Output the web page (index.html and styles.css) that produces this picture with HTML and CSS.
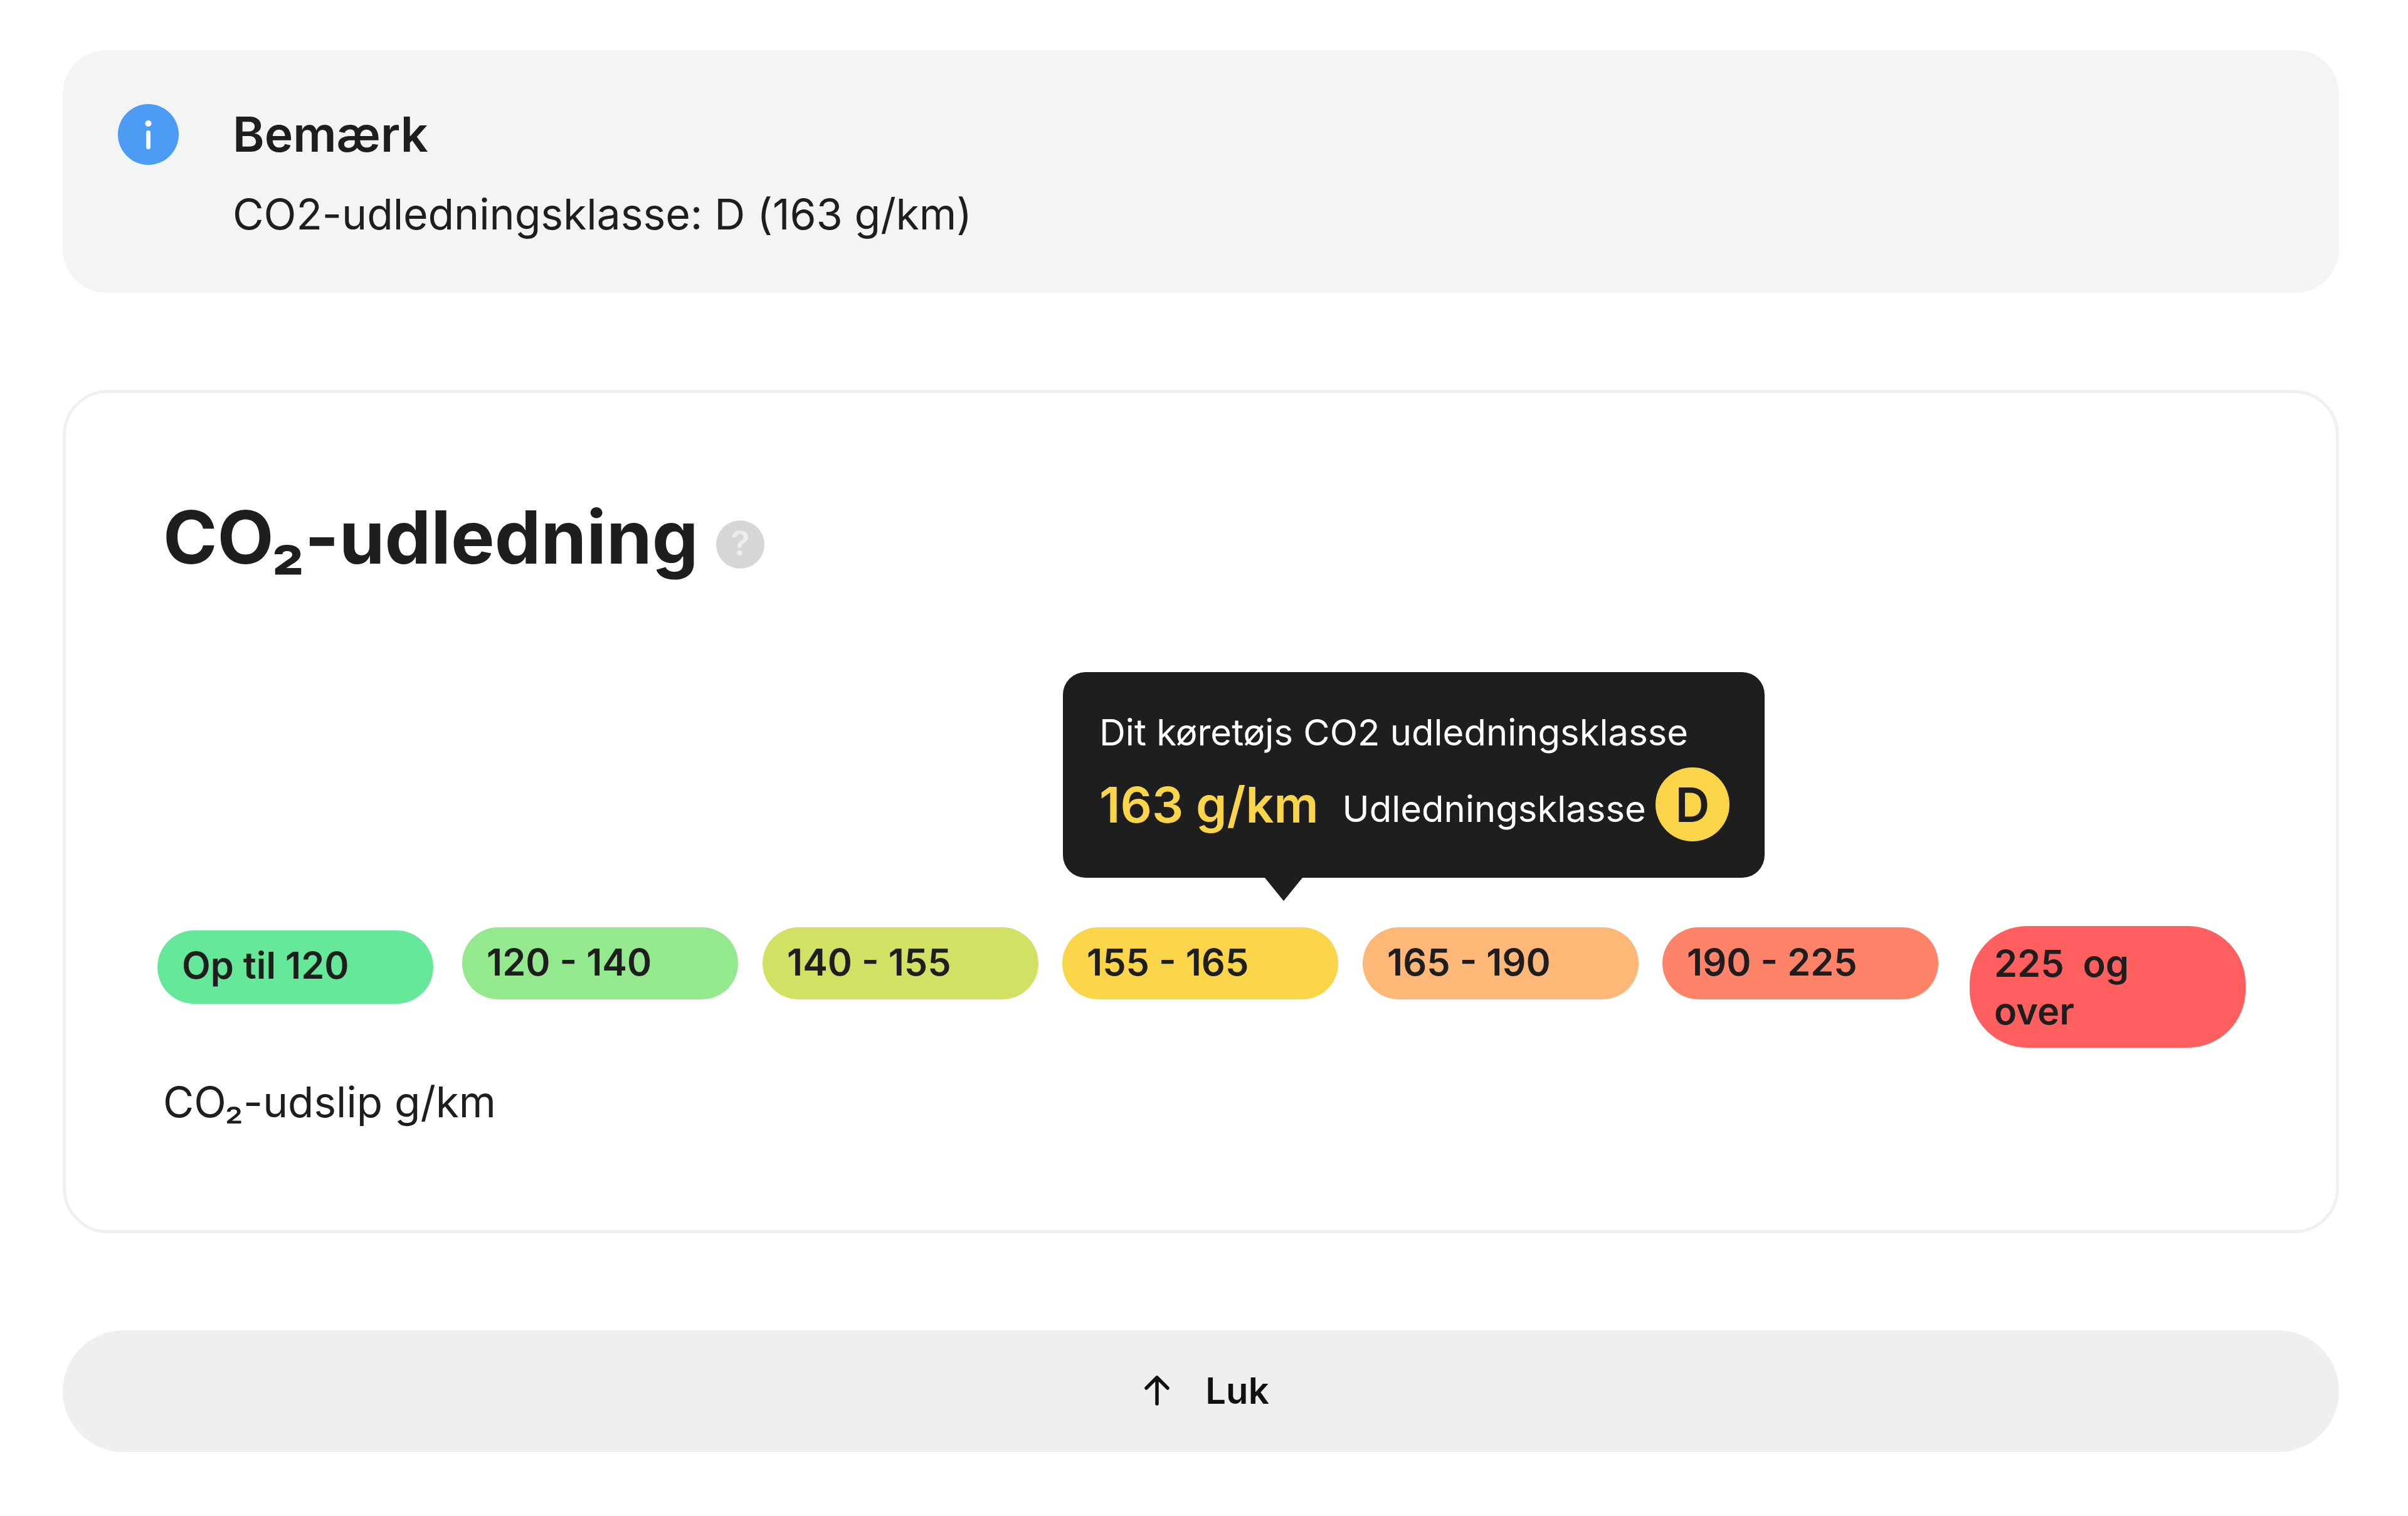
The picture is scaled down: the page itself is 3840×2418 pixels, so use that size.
FILE: index.html
```html
<!DOCTYPE html>
<html lang="da">
<head>
<meta charset="utf-8">
<title>CO2-udledning</title>
<link rel="stylesheet" href="styles.css">
</head>
<body>
<main class="page">
  <section class="note">
    <svg class="note-icon" viewBox="0 0 97 97" aria-hidden="true">
      <circle cx="48.5" cy="48.5" r="48.5" fill="#4c9bf5"/>
      <circle cx="48.5" cy="31" r="5" fill="#fff"/>
      <rect x="45" y="42" width="7" height="30" rx="3.5" fill="#fff"/>
    </svg>
    <div class="note-body">
      <h2 class="note-title">Bemærk</h2>
      <p class="note-text">CO2-udledningsklasse: D (163 g/km)</p>
    </div>
  </section>

  <section class="card">
    <h1 class="card-title">CO₂-udledning
      <svg class="help-icon" viewBox="0 0 78 78" aria-hidden="true">
        <circle cx="39" cy="39" r="39" fill="#d6d6d6"/>
        <text x="39" y="57" text-anchor="middle" class="help-mark">?</text>
      </svg>
    </h1>

    <div class="scale">
      <div class="tooltip">
        <p class="tooltip-title">Dit køretøjs CO2 udledningsklasse</p>
        <div class="tooltip-row">
          <span class="tooltip-value">163 g/km</span>
          <span class="tooltip-label">Udledningsklasse</span>
          <span class="tooltip-badge">D</span>
        </div>
      </div>
      <div class="pill pill-a">Op til 120</div>
      <div class="pill pill-b">120 - 140</div>
      <div class="pill pill-c">140 - 155</div>
      <div class="pill pill-d">155 - 165</div>
      <div class="pill pill-e">165 - 190</div>
      <div class="pill pill-f">190 - 225</div>
      <div class="pill pill-g">225&nbsp; og<br>over</div>
    </div>

    <p class="unit">CO₂-udslip g/km</p>
  </section>

  <button class="close" type="button">
    <svg class="close-icon" viewBox="0 0 40 48" aria-hidden="true">
      <path d="M20 45V3M3 20 20 3l17 17" fill="none" stroke="#111" stroke-width="5.5" stroke-linecap="round" stroke-linejoin="round"/>
    </svg>
    <span>Luk</span>
  </button>
</main>
</body>
</html>
```
FILE: styles.css
```css
* { box-sizing: border-box; }
html, body { margin: 0; background: #fff; }
body { font-family: Inter, "Liberation Sans", sans-serif; color: #1e1e1e; }
.page { width: 3840px; height: 2418px; padding: 80px 110px 0 100px; display: flex; flex-direction: column; }

.note { height: 387px; background: #f3f5f4; border-radius: 70px; padding: 86px 86px 0 88px; display: flex; gap: 86px; }
.note-icon { width: 97px; height: 97px; flex: none; }
.note-title { margin: 0; font-size: 77px; line-height: 96px; font-weight: 600; }
.note-text { margin: 31px 0 0; font-size: 68px; line-height: 96px; font-weight: 400; letter-spacing: -0.1px; }

.card { position: relative; height: 1345px; margin-top: 155px; border: 5px solid #f0f0f0; border-radius: 72px; padding: 160px 0 0 155px; }
.card-title { margin: 0; display: flex; align-items: center; gap: 28px; font-size: 117px; line-height: 140px; font-weight: 700; }
.help-icon { width: 77px; height: 77px; margin-top: 22px; }
.help-mark { font-size: 56px; font-weight: 600; fill: #ececec; font-family: Inter, sans-serif; }

.scale { position: relative; height: 194px; margin: 550px 0 0 -6px; display: flex; align-items: flex-start; }
.pill { width: 440px; padding: 17px 39px 22px; font-size: 59.5px; line-height: 76px; font-weight: 600; border-radius: 60px; flex: none; }
.pill-a { background: #66e89b; margin: 7px 46px 0 -3px; padding: 16.5px 39px 24.5px; }
.pill-b { background: #94e88e; margin: 2px 39px 0 0; }
.pill-c { background: #d2e163; margin: 2px 38px 0 0; }
.pill-d { background: #fad54a; margin: 2px 39px 0 0; }
.pill-e { background: #fdb877; margin: 2px 38px 0 0; }
.pill-f { background: #ff8368; margin: 2px 50px 0 0; }
.pill-g { background: #ff5f5f; height: 194px; border-radius: 92px; margin-top: 0; padding-top: 20.5px; }

.tooltip { position: absolute; left: 1441px; bottom: 271px; width: 1119px; height: 328px; background: #1e1e1e; color: #fff; border-radius: 36px; padding: 58px 58px 0; }
.tooltip::after { content: ""; position: absolute; left: 322px; bottom: -37px; border-style: solid; border-width: 37px 30px 0; border-color: #1e1e1e transparent transparent; }
.tooltip-title { margin: 0; font-size: 58px; line-height: 76px; }
.tooltip-row { display: flex; align-items: center; margin-top: 18px; white-space: nowrap; }
.tooltip-value { font-size: 79px; font-weight: 600; color: #fad54a; margin-right: 38px; line-height: 118px; }
.tooltip-label { font-size: 58px; margin-right: 15px; margin-top: 13px; }
.tooltip-badge { flex: none; width: 118px; height: 118px; border-radius: 50%; background: #fad54a; color: #1e1e1e; font-size: 76px; font-weight: 600; display: flex; align-items: center; justify-content: center; }

.unit { margin: 39px 0 0; font-size: 67.5px; line-height: 96px; }

.close { margin-top: 155px; height: 194px; border: 0; border-radius: 97px; background: #efefef; color: #111; font-family: inherit; font-size: 58px; font-weight: 600; display: flex; align-items: center; justify-content: center; gap: 57px; padding: 0 0 2px 19px; }
.close-icon { width: 40px; height: 48px; }
```
